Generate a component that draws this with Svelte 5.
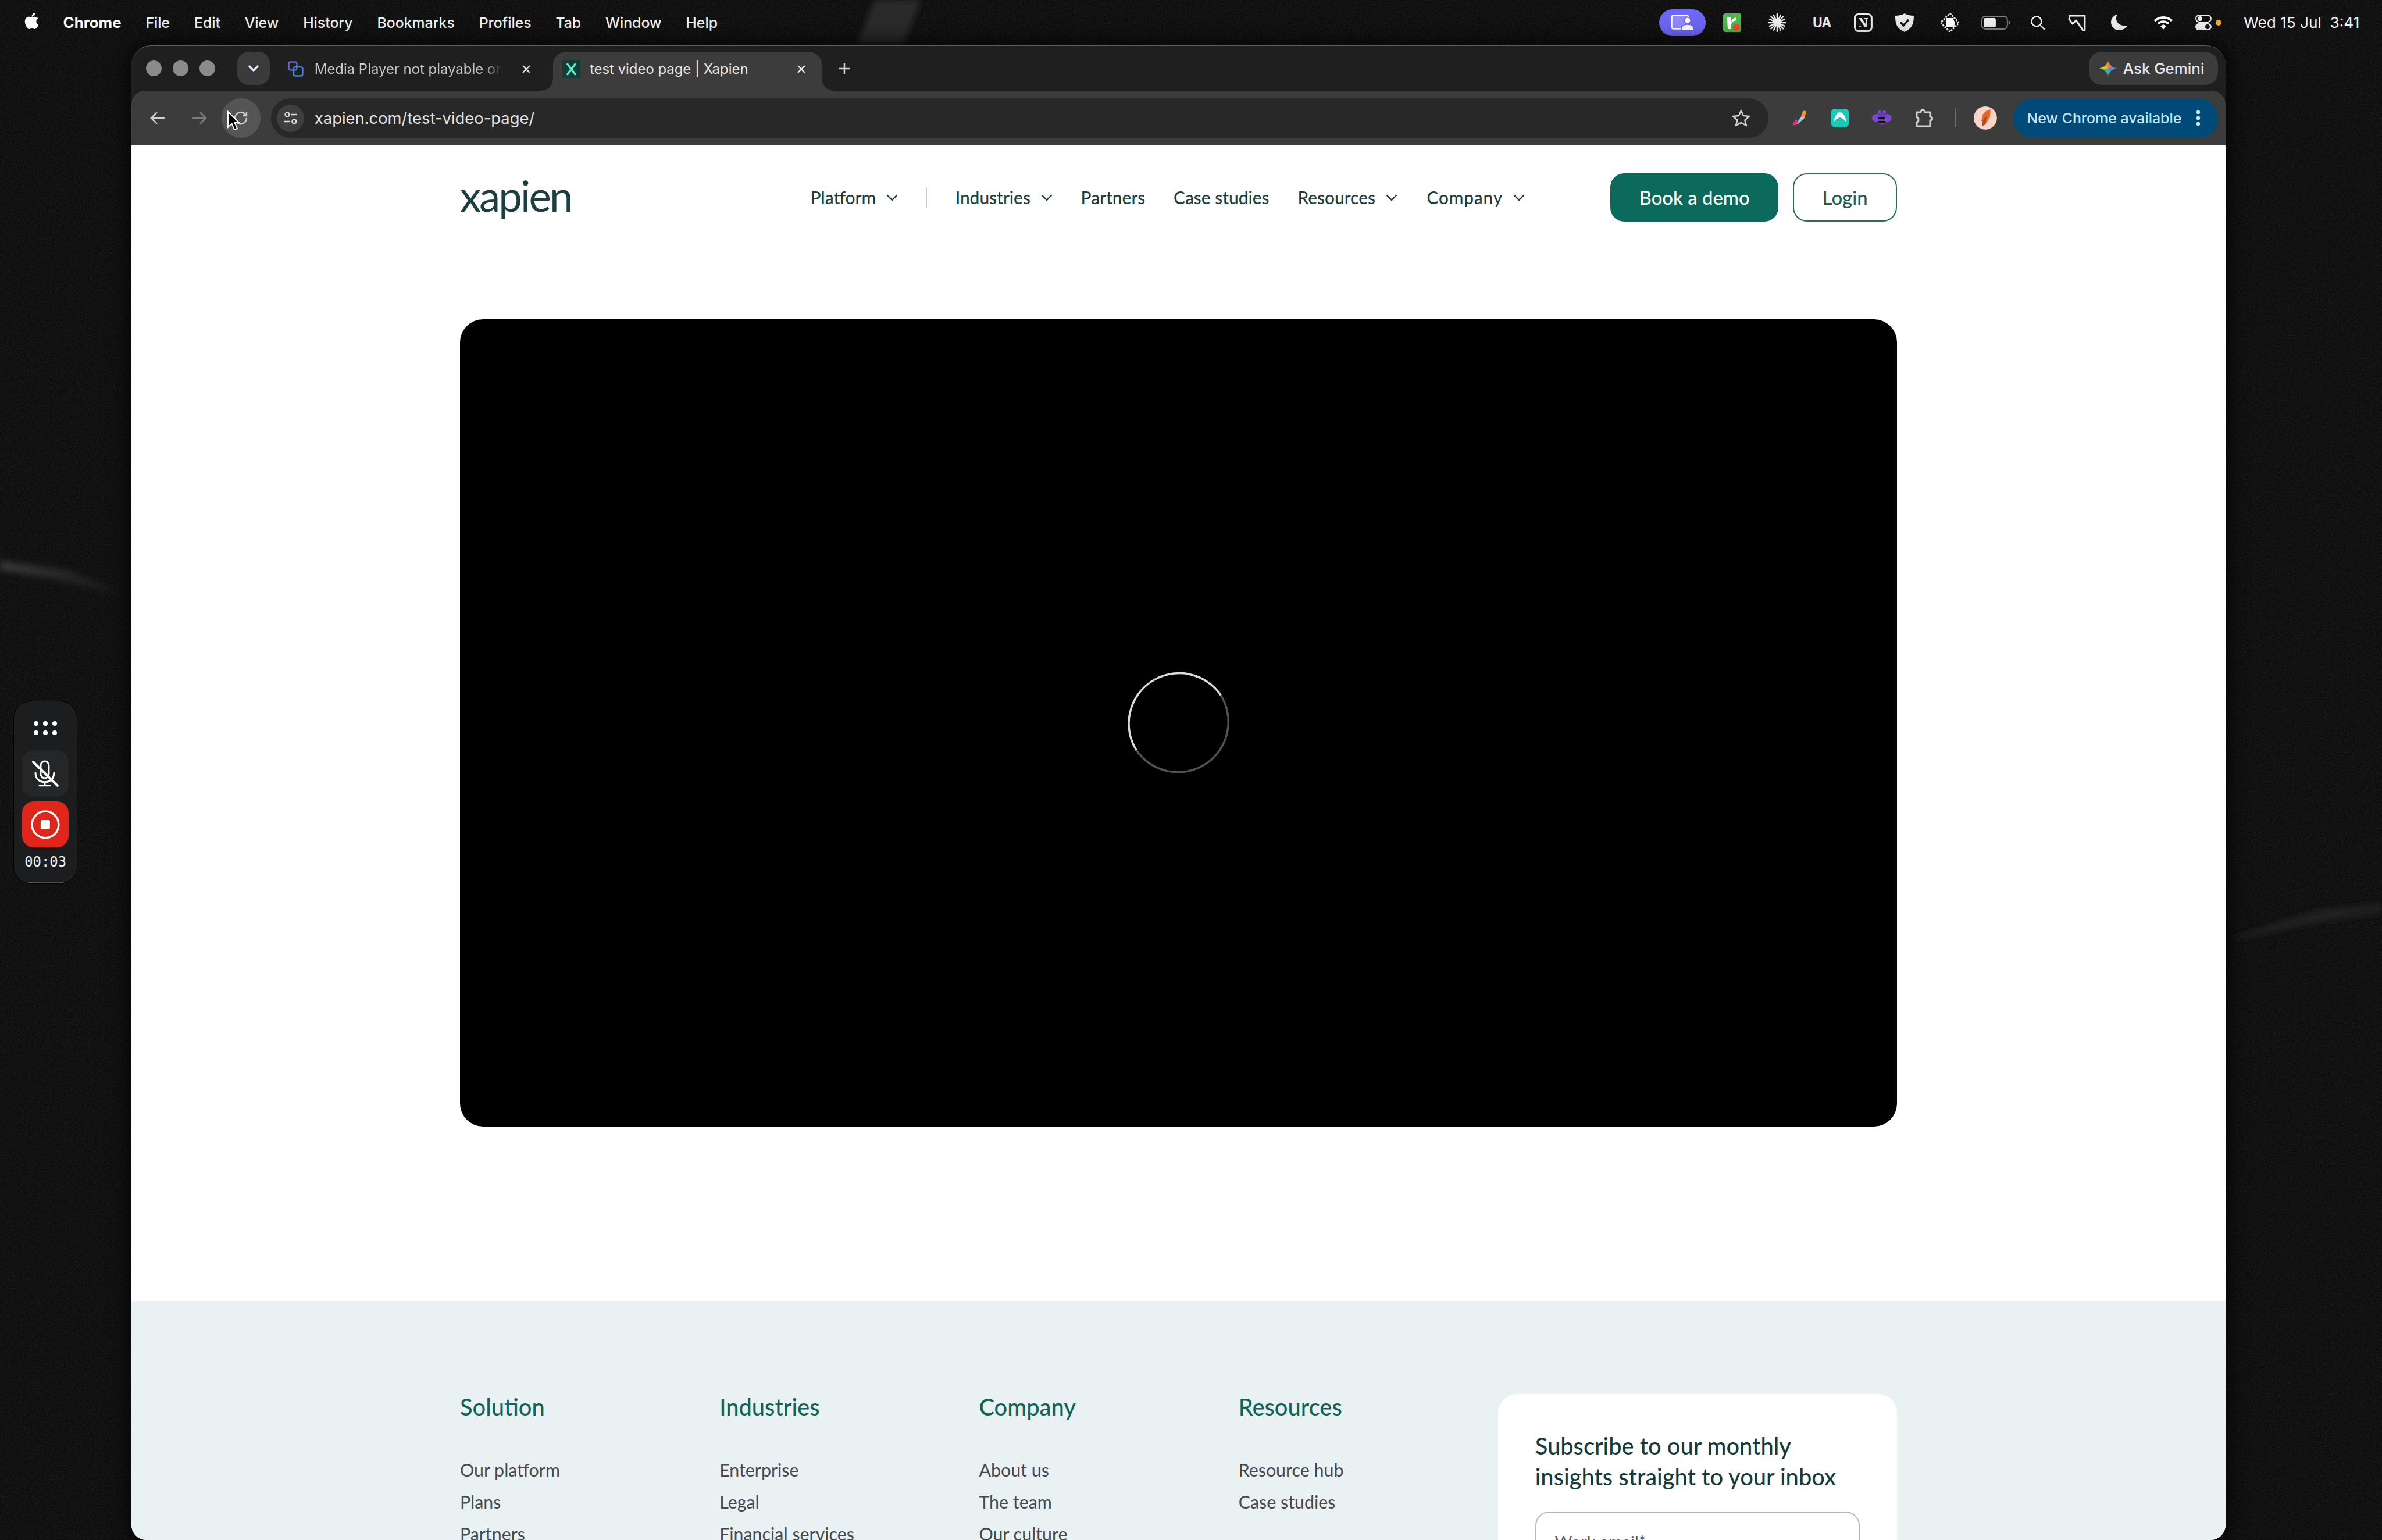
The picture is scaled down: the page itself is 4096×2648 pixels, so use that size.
<script>
  const menus = ['File', 'Edit', 'View', 'History', 'Bookmarks', 'Profiles', 'Tab', 'Window', 'Help']
  const nav = [
    { label: 'Platform', caret: true },
    { divider: true },
    { label: 'Industries', caret: true },
    { label: 'Partners' },
    { label: 'Case studies' },
    { label: 'Resources', caret: true },
    { label: 'Company', caret: true, wide: true }
  ]
  const columns = [
    { title: 'Solution', links: ['Our platform', 'Plans', 'Partners'] },
    { title: 'Industries', links: ['Enterprise', 'Legal', 'Financial services'] },
    { title: 'Company', links: ['About us', 'The team', 'Our culture'] },
    { title: 'Resources', links: ['Resource hub', 'Case studies'] }
  ]
</script>

<div class="screen">
  <!-- wallpaper -->
  <svg class="wallpaper" width="4112" height="2658" viewBox="0 0 4112 2658">
    <defs>
      <filter id="grain" x="0" y="0" width="100%" height="100%">
        <feTurbulence type="fractalNoise" baseFrequency="0.55" numOctaves="2" seed="4" />
        <feColorMatrix values="0 0 0 0 1  0 0 0 0 1  0 0 0 0 1  0.5 0 0 0 -0.17" />
      </filter>
      <filter id="soft"><feGaussianBlur stdDeviation="6" /></filter>
      <linearGradient id="streak" x1="0" x2="1">
        <stop offset="0" stop-color="#777" stop-opacity="0.4" />
        <stop offset="1" stop-color="#777" stop-opacity="0" />
      </linearGradient>
    </defs>
    <rect width="4112" height="2658" fill="#0c0c0c" />
    <rect width="4112" height="2658" filter="url(#grain)" opacity="0.3" />
    <path d="M0 968 L120 985 L226 1028 L226 1034 L100 1000 L0 984 Z" fill="url(#streak)" filter="url(#soft)" />
    <path d="M1510 0 L1590 0 L1560 76 L1480 76 Z" fill="#292929" filter="url(#soft)" />
    <path d="M4112 1560 L4000 1572 L3860 1616 L3860 1622 L4010 1590 L4112 1576 Z" fill="#222" filter="url(#soft)" />
  </svg>

  <header class="menubar">
    <svg class="apple" viewBox="0 0 384 512" fill="#fff"><path d="M318.7 268.7c-.2-36.7 16.4-64.4 50-84.8-18.8-26.9-47.2-41.7-84.7-44.6-35.5-2.8-74.3 20.7-88.5 20.7-15 0-49.4-19.7-76.4-19.7C63.3 141.2 4 184.8 4 273.5q0 39.3 14.4 81.2c12.8 36.7 59 126.7 107.2 125.2 25.2-.6 43-17.9 75.8-17.9 31.8 0 48.3 17.9 76.4 17.9 48.6-.7 90.4-82.5 102.6-119.3-65.2-30.7-61.7-90-61.7-91.9zm-56.6-164.2c27.3-32.4 24.8-61.9 24-72.5-24.1 1.4-52 16.4-67.9 34.9-17.5 19.8-27.8 44.3-25.6 71.9 26.1 2 49.9-11.4 69.5-34.3z"/></svg>
    <span class="app-name">Chrome</span>
    {#each menus as m}<span class="menu">{m}</span>{/each}

    <div class="status">
      <div class="st-pill">
        <svg width="40" height="28" viewBox="0 0 40 28"><rect x="1.5" y="1.5" width="29" height="23" rx="3" fill="#8f88ff" stroke="#fff" stroke-width="2.5"/><circle cx="29" cy="10" r="5.5" fill="#fff" stroke="#6e66f5" stroke-width="2"/><path d="M18 27c0-7 5-10 11-10s11 3 11 10z" fill="#fff" stroke="#6e66f5" stroke-width="1.5"/></svg>
      </div>
      <svg class="s-y" width="32" height="32" viewBox="0 0 32 32"><rect width="32" height="32" rx="4" fill="#4cb848"/><path d="M7 7h7v8c1-4 3-7 8-8v5c-4 1-7 3-8 8v7H8z" fill="#fff"/><circle cx="23" cy="24" r="6" fill="#ee4b36"/></svg>
      <svg class="s-star" width="32" height="32" viewBox="0 0 32 32" stroke="#eee" stroke-width="2.400" stroke-linecap="round"><path d="M16 1v30M1 16h30M5.500 5.500l21 21M26.500 5.500l-21 21M10 3l12 26M22 3L10 29M3 10l26 12M29 10L3 22"/><circle cx="16" cy="16" r="3" fill="#eee" stroke="none"/></svg>
      <span class="s-ua">UA</span>
      <svg class="s-n" width="32" height="32" viewBox="0 0 32 32"><rect x="1.500" y="1.500" width="29" height="29" rx="6" fill="none" stroke="#eee" stroke-width="3"/><path d="M8 8h5l7 10V10l-2-1V8h6v1l-2 1v14h-3L11 12v10l2 1v1H8v-1l2-1V10L8 9z" fill="#eee"/></svg>
      <svg class="s-shield" width="32" height="32" viewBox="0 0 32 32"><path d="M16 0C21 3 26 4 32 4c0 13-2 22-16 28C2 26 0 17 0 4c6 0 11-1 16-4z" fill="#e8e8e8"/><path d="M9 15l5 6 9-10" fill="none" stroke="#111" stroke-width="3.500"/></svg>
      <svg class="s-drive" width="32" height="32" viewBox="0 0 32 32"><path d="M16 0l16 16-16 16L0 16z" fill="none" stroke="#eee" stroke-width="3" stroke-dasharray="3 2"/><path d="M9 8h12l3 6v9H9z" fill="#fff"/></svg>
      <svg class="s-batt" width="50" height="24" viewBox="0 0 50 24"><rect x="1" y="1" width="44" height="22" rx="6" fill="none" stroke="#808080" stroke-width="2"/><rect x="4" y="4" width="21" height="16" rx="3" fill="#eee"/><path d="M47 8c2 1 3 3 3 4s-1 3-3 4z" fill="#808080"/></svg>
      <svg class="s-search" width="26" height="24" viewBox="0 0 26 24" fill="none" stroke="#eee" stroke-width="2.500"><circle cx="10" cy="10" r="8.500"/><path d="M16 16l8 8" stroke-linecap="round"/></svg>
      <svg class="s-tag" width="32" height="28" viewBox="0 0 32 28" fill="none" stroke="#eee" stroke-width="3" stroke-linejoin="round"><path d="M3 2h26v23a2 2 0 0 1-4 1L14 10 8 16 2 8z"/></svg>
      <svg class="s-moon" width="28" height="27" viewBox="0 0 28 27"><path d="M11 0C6 8 10 20 28 20c-4 5-9 7-14 7C5 27 0 20 0 13 0 7 5 1 11 0z" fill="#eee"/></svg>
      <svg class="s-wifi" width="34" height="24" viewBox="0 0 34 24" fill="none" stroke="#fff" stroke-width="4"><path d="M2 9c9-8 21-8 30 0M8 14c5-5 13-5 18 0"/><path d="M12 18l5-3 5 3-5 6z" fill="#fff" stroke="none"/></svg>
      <svg class="s-ctrl" width="28" height="27" viewBox="0 0 28 27"><rect x="1" y="1" width="26" height="12" rx="6" fill="none" stroke="#eee" stroke-width="2"/><circle cx="8" cy="7" r="4" fill="#eee"/><rect y="15" width="28" height="12" rx="6" fill="#eee"/><circle cx="21" cy="21" r="4" fill="#111"/></svg>
      <span class="s-dot"></span>
      <span class="clock">Wed 15 Jul&nbsp;&nbsp;3:41</span>
    </div>
  </header>

  <div class="window">
    <div class="tabstrip">
      <div class="lights"><i></i><i></i><i></i></div>
      <div class="tab-search">
        <svg width="20" height="12" viewBox="0 0 20 12" fill="none" stroke="#dfe6ff" stroke-width="3.500" stroke-linecap="round" stroke-linejoin="round"><path d="M3 2l7 7 7-7"/></svg>
      </div>
      <div class="tab">
        <svg width="27" height="27" viewBox="0 0 27 27" fill="none" stroke-width="2.500"><rect x="1.500" y="1.500" width="14" height="14" rx="3" stroke="#5d66cf"/><rect x="10" y="10" width="15.500" height="15.500" rx="3" stroke="#3f86e4"/></svg>
        <span class="tab-title fade">Media Player not playable on</span>
        <svg class="close" width="14" height="14" viewBox="0 0 14 14" stroke="#d8d8d8" stroke-width="2.400"><path d="M1 1l12 12M13 1L1 13"/></svg>
      </div>
      <div class="tab active">
        <svg class="x-fav" width="31" height="31" viewBox="0 0 31 31"><rect width="31" height="31" fill="#123c3a"/><path d="M8 6l15 20M23 6L8 26" stroke="#5ff0c4" stroke-width="3.500"/></svg>
        <span class="tab-title">test video page | Xapien</span>
        <svg class="close" width="14" height="14" viewBox="0 0 14 14" stroke="#e4e4e4" stroke-width="2.400"><path d="M1 1l12 12M13 1L1 13"/></svg>
      </div>
      <svg class="plus" width="20" height="20" viewBox="0 0 20 20" stroke="#d8d8d8" stroke-width="2.500"><path d="M10 1v18M1 10h18"/></svg>
      <div class="gemini">
        <span class="gem-star"></span>
        <span>Ask Gemini</span>
      </div>
    </div>

    <div class="toolbar">
      <div class="tb-btn">
        <svg width="26" height="24" viewBox="0 0 26 24" fill="none" stroke="#cfcfcf" stroke-width="2.600"><path d="M25 12H2M12 2L2 12l10 10"/></svg>
      </div>
      <div class="tb-btn">
        <svg width="26" height="24" viewBox="0 0 26 24" fill="none" stroke="#7c7c7c" stroke-width="2.600"><path d="M1 12h23M14 2l10 10-10 10"/></svg>
      </div>
      <div class="tb-btn hover">
        <svg width="26" height="26" viewBox="0 0 26 26" fill="none" stroke="#c9c9c9" stroke-width="2.600"><path d="M23 13a10 10 0 1 1-3-7l3 3"/><path d="M23 2v7h-7"/></svg>
      </div>

      <div class="omnibox">
        <div class="site-btn">
          <svg width="24" height="24" viewBox="0 0 24 24" fill="none" stroke="#ddd" stroke-width="2.400"><circle cx="6" cy="6" r="3.500"/><path d="M13 6h10M1 18h10"/><circle cx="18" cy="18" r="3.500"/></svg>
        </div>
        <span class="url">xapien.com/test-video-page/</span>
        <svg class="star" width="30" height="30" viewBox="0 0 30 30" fill="none" stroke="#cfcfcf" stroke-width="2.600" stroke-linejoin="round"><path d="M15 2l4 9 10 1-7.500 6.500L24 28l-9-5-9 5 2.500-9.500L1 12l10-1z"/></svg>
      </div>

      <div class="ext-icons">
        <svg width="27" height="26" viewBox="0 0 27 26"><path d="M18 8l5 4-12 11-5 2z" fill="#9fc7e6"/><path d="M1 24l6-9 5 5-7 6z" fill="#d63768"/><path d="M16 10l3-8c1-2 6-2 6 1l-3 9z" fill="#f7971e"/></svg>
        <svg width="32" height="32" viewBox="0 0 32 32"><rect width="32" height="32" rx="8" fill="#1ec8b4"/><path d="M5 23c2-11 6-17 11-17s9 6 11 17c-3-3-5-6-7-6l-4-3-4 3c-2 0-4 3-7 6z" fill="#fff"/></svg>
        <svg width="34" height="26" viewBox="0 0 34 26"><ellipse cx="8" cy="13" rx="8" ry="7" fill="#7b45d6"/><ellipse cx="26" cy="13" rx="8" ry="7" fill="#7b45d6"/><circle cx="13" cy="3" r="3" fill="#7b45d6"/><circle cx="21" cy="3" r="3" fill="#7b45d6"/><rect x="11" y="5" width="12" height="20" rx="6" fill="#6c3bbd"/><path d="M11 12h12v3H11zM11 18h12v3H11z" fill="#111"/></svg>
        <svg width="32" height="32" viewBox="0 0 32 32" fill="none" stroke="#cfcfcf" stroke-width="3" stroke-linejoin="round"><path d="M3 6h7c0-5 7-5 7 0h9v8c5 0 5 6 0 6v10H3v-7c4 0 4-8 0-8z"/></svg>
        <span class="sep"></span>
        <svg class="avatar" width="40" height="40" viewBox="0 0 40 40"><circle cx="20" cy="20" r="20" fill="#fbd5c8"/><path d="M16 13l5-5 8-3-1 13-8 13-6 3 3-8-4-1z" fill="#e8652a"/><path d="M16 24l6-8-2 15-6 3z" fill="#a8471d"/></svg>
      </div>

      <div class="update">
        <span>New Chrome available</span>
        <svg width="8" height="28" viewBox="0 0 8 28" fill="#c2e7ff"><circle cx="4" cy="4" r="3.200"/><circle cx="4" cy="14" r="3.200"/><circle cx="4" cy="24" r="3.200"/></svg>
      </div>
    </div>

    <main class="page">
      <div class="container">
        <div class="site-header">
          <span class="logo">xapien</span>
          <nav class="nav">
            {#each nav as item}
              {#if item.divider}
                <span class="nav-divider"></span>
              {:else}
                <span class="nav-item" class:wide={item.wide}>
                  {item.label}
                  {#if item.caret}
                    <svg width="20" height="12" viewBox="0 0 20 12" fill="none" stroke="#1d3f3f" stroke-width="2.400"><path d="M1.500 1.500L10 10l8.500-8.500"/></svg>
                  {/if}
                </span>
              {/if}
            {/each}
          </nav>
          <div class="actions">
            <span class="btn primary">Book a demo</span>
            <span class="btn outline">Login</span>
          </div>
        </div>

        <div class="video">
          <svg width="180" height="180" viewBox="0 0 180 180" fill="none" stroke-width="3.500">
            <path d="M162.800 42.400A87 87 0 0 1 17.200 137.600" stroke="#525252" />
            <path d="M17.200 137.600A87 87 0 0 1 162.800 42.400" stroke="#dcdcdc" />
          </svg>
        </div>
      </div>

      <footer class="footer">
        <div class="container footer-grid">
          {#each columns as col}
            <div>
              <h4>{col.title}</h4>
              <ul>
                {#each col.links as link}<li>{link}</li>{/each}
              </ul>
            </div>
          {/each}
          <div class="subscribe">
            <h3>Subscribe to our monthly<br />insights straight to your inbox</h3>
            <div class="email"><span>Work email*</span></div>
          </div>
        </div>
      </footer>
    </main>
  </div>

  <!-- screen recorder overlay -->
  <div class="recorder">
    <div class="grip">{#each Array(6) as _}<i></i>{/each}</div>
    <div class="rec-btn mic">
      <svg width="46" height="46" viewBox="0 0 46 46" fill="none" stroke="#fff" stroke-width="3" stroke-linecap="round">
        <path d="M15 9a7 7 0 0 1 14 0v15a7 7 0 0 1-14 0z" />
        <path d="M6 22c0 10 7 16 16 16s16-6 16-16M22 38v5M13 44h18" />
        <path d="M2 3l42 41" stroke-width="4" />
      </svg>
    </div>
    <div class="rec-btn stop">
      <svg width="52" height="52" viewBox="0 0 52 52"><circle cx="26" cy="26" r="23" fill="none" stroke="#fff" stroke-width="3.500"/><rect x="18" y="18" width="16" height="16" rx="3" fill="#fff"/></svg>
    </div>
    <span class="timer">00:03</span>
    <span class="handle"></span>
  </div>

  <svg class="cursor" width="22" height="36" viewBox="0 0 22 36"><path d="M2 2v27l6.500-6.500L13 33l5-2-4.500-10H21z" fill="#000" stroke="#fff" stroke-width="2"/></svg>
</div>

<style>
  :global(html), :global(body) {
    margin: 0;
    background: #0b0b0b;
    overflow: hidden;
  }

  /* everything below is written in reference pixels */
  .screen {
    position: relative;
    zoom: 0.99611;
    width: 4112px;
    height: 2658px;
    overflow: hidden;
    font-family: Inter, 'Liberation Sans', sans-serif;
    color: #fff;
  }
  .wallpaper {
    position: absolute;
    inset: 0;
  }

  .menubar {
    position: relative;
    height: 78px;
    display: flex;
    align-items: center;
    gap: 42px;
    padding-left: 42px;
    padding-right: 36px;
    box-sizing: border-box;
    font-size: 24.900px;
    font-weight: 500;
    color: #f2f2f2;
  }
  .apple {
    width: 25px;
    height: 32px;
    margin-top: -6px;
  }
  .app-name {
    font-size: 26px;
    font-weight: 700;
    color: #fff;
  }
  .status {
    margin-left: auto;
    display: flex;
    align-items: center;
  }
  .st-pill {
    width: 80px;
    height: 46px;
    border-radius: 23px;
    background: #6e66f5;
    display: flex;
    align-items: center;
    justify-content: center;
  }
  .s-y { margin-left: 30px; }
  .s-star { margin-left: 46px; }
  .s-ua {
    margin-left: 45px;
    width: 33px;
    font-size: 23px;
    font-weight: 700;
    color: #eee;
    letter-spacing: -1px;
  }
  .s-n { margin-left: 38px; }
  .s-shield { margin-left: 40px; }
  .s-drive { margin-left: 46px; }
  .s-batt { margin-left: 38px; }
  .s-search { margin-left: 36px; }
  .s-tag { margin-left: 38px; }
  .s-moon { margin-left: 42px; }
  .s-wifi { margin-left: 45px; }
  .s-ctrl { margin-left: 39px; }
  .s-dot {
    margin-left: 7px;
    width: 10px;
    height: 10px;
    border-radius: 50%;
    background: #f5a623;
  }
  .clock {
    margin-left: 38px;
    width: 203px;
    white-space: nowrap;
    font-size: 26.300px;
    font-weight: 400;
  }

  .window {
    position: relative;
    margin-left: 227px;
    width: 3615px;
    height: 2580px;
    border-radius: 34px 34px 26px 26px;
    overflow: hidden;
    background: #1f1f1f;
    border-top: 2px solid #5c5c5c;
    box-sizing: border-box;
    display: flex;
    flex-direction: column;
    box-shadow: 0 0 40px #000;
  }

  .tabstrip {
    height: 78px;
    flex: none;
    display: flex;
    align-items: center;
    font-size: 24px;
    color: #c8c8c8;
  }
  .lights {
    display: flex;
    gap: 19px;
    margin-left: 25px;
  }
  .lights i {
    width: 27px;
    height: 27px;
    border-radius: 50%;
    background: #8b8b8b;
  }
  .tab-search {
    margin-left: 39px;
    width: 56px;
    height: 57px;
    border-radius: 20px;
    background: #3b3b3b;
    display: flex;
    align-items: center;
    justify-content: center;
  }
  .tab {
    position: relative;
    align-self: flex-end;
    height: 68px;
    box-sizing: border-box;
    display: flex;
    align-items: center;
    width: 465px;
    margin-left: 14px;
    padding-left: 17px;
    padding-bottom: 8px;
  }
  .tab-title {
    margin-left: 19px;
    white-space: nowrap;
    overflow: hidden;
    flex: 1;
  }
  .fade {
    mask-image: linear-gradient(to right, #000 90%, transparent 100%);
  }
  .close {
    flex: none;
    margin-left: 35px;
    margin-right: 29px;
  }
  .tab.active {
    width: 464px;
    margin-left: 10px;
    padding-left: 16px;
    background: #3c3c3c;
    border-radius: 22px 22px 0 0;
    color: #e6e6e6;
  }
  .tab.active .tab-title {
    margin-left: 16px;
  }
  .tab.active::before,
  .tab.active::after {
    content: '';
    position: absolute;
    bottom: 0;
    width: 20px;
    height: 20px;
  }
  .tab.active::before {
    left: -20px;
    background: radial-gradient(circle at 0 0, transparent 19.500px, #3c3c3c 20px);
  }
  .tab.active::after {
    right: -20px;
    background: radial-gradient(circle at 100% 0, transparent 19.500px, #3c3c3c 20px);
  }
  .plus {
    margin-left: 29px;
  }
  .gemini {
    margin-left: auto;
    margin-right: 13px;
    width: 223px;
    height: 57px;
    box-sizing: border-box;
    padding-left: 18px;
    border-radius: 22px;
    background: #3c3c3c;
    display: flex;
    align-items: center;
    gap: 11px;
    color: #e8e8e8;
    font-weight: 500;
    font-size: 26px;
    white-space: nowrap;
  }
  .gem-star {
    width: 30px;
    height: 30px;
    flex: none;
    background: conic-gradient(#f0803a 0 12%, #4b8df0 25%, #4b8df0 40%, #45b86a 55%, #45b86a 65%, #e8c53a 78%, #f0803a 100%);
    clip-path: path('M15 0C16 8 22 14 30 15 22 16 16 22 15 30 14 22 8 16 0 15 8 14 14 8 15 0Z');
  }

  .toolbar {
    height: 94px;
    flex: none;
    background: #3c3c3c;
    border-radius: 24px 24px 0 0;
    display: flex;
    align-items: center;
    padding-left: 11px;
    gap: 4px;
  }
  .tb-btn {
    width: 68px;
    height: 68px;
    border-radius: 50%;
    display: flex;
    align-items: center;
    justify-content: center;
  }
  .tb-btn.hover {
    background: #555;
  }
  .omnibox {
    margin-left: 14px;
    width: 2585px;
    height: 68px;
    box-sizing: border-box;
    padding-left: 10px;
    border-radius: 34px;
    background: #282828;
    display: flex;
    align-items: center;
  }
  .site-btn {
    width: 47px;
    height: 47px;
    border-radius: 50%;
    background: #3f3f3f;
    display: flex;
    align-items: center;
    justify-content: center;
  }
  .url {
    margin-left: 18px;
    font-size: 27.500px;
    color: #e4e4e4;
  }
  .star {
    margin-left: auto;
    margin-right: 32px;
  }
  .ext-icons {
    margin-left: 36px;
    display: flex;
    align-items: center;
    gap: 40px;
  }
  .sep {
    width: 3px;
    height: 32px;
    margin-left: -4px;
    background: #6a6a6a;
  }
  .avatar {
    margin-left: -10px;
  }
  .update {
    margin-left: 25px;
    width: 353px;
    height: 69px;
    box-sizing: border-box;
    padding-left: 23px;
    border-radius: 35px;
    background: #004a77;
    color: #c2e7ff;
    display: flex;
    align-items: center;
    font-size: 25px;
    font-weight: 500;
    white-space: nowrap;
  }
  .update svg {
    margin-left: 25px;
  }

  .page {
    flex: 1;
    background: #fff;
    min-height: 0;
    overflow: hidden;
    font-family: Lato, 'Liberation Sans', sans-serif;
  }
  .container {
    width: 2481px;
    margin: 0 auto;
  }
  .site-header {
    display: flex;
    align-items: center;
    height: 84px;
    padding-top: 48px;
  }
  .logo {
    width: 193px;
    font-size: 73px;
    font-weight: 400;
    color: #1d3f3f;
    letter-spacing: -3px;
    line-height: 84px;
    margin-top: -8px;
    white-space: nowrap;
  }
  .nav {
    margin-left: 412px;
    display: flex;
    align-items: center;
    gap: 49px;
    font-size: 30px;
    font-weight: 500;
    color: #1d3f3f;
  }
  .nav-item {
    display: flex;
    align-items: center;
    gap: 18px;
    white-space: nowrap;
  }
  .nav-item.wide {
    margin-left: 2px;
    letter-spacing: 0.8px;
  }
  .nav-divider {
    width: 1px;
    height: 36px;
    background: #c9cfcf;
  }
  .actions {
    margin-left: auto;
    display: flex;
    gap: 25px;
    font-size: 33px;
    font-weight: 500;
  }
  .btn {
    height: 84px;
    box-sizing: border-box;
    border-radius: 24px;
    display: flex;
    align-items: center;
    justify-content: center;
  }
  .primary {
    width: 290px;
    background: #0b6a5c;
    color: #fff;
  }
  .outline {
    width: 180px;
    border: 2.500px solid #2a6a60;
    color: #1f5f55;
  }
  .video {
    margin-top: 168px;
    height: 1394px;
    border-radius: 40px;
    background: #000;
    display: flex;
    align-items: center;
    justify-content: center;
  }

  .footer {
    margin-top: 301px;
    background: #e9f1f3;
    padding-top: 160px;
    height: 900px;
  }
  .footer-grid {
    display: grid;
    grid-template-columns: repeat(4, 448px) 689px;
  }
  h4 {
    margin: 0;
    font-size: 40px;
    line-height: 44px;
    font-weight: 500;
    color: #0f6656;
  }
  ul {
    list-style: none;
    margin: 60px 0 0;
    padding: 0;
    font-size: 30.500px;
    line-height: 55px;
    color: #444b4c;
  }
  .subscribe {
    background: #fff;
    border-radius: 32px;
    padding: 64px 64px 0;
    height: 600px;
    box-sizing: border-box;
  }
  h3 {
    margin: 0;
    font-size: 40px;
    line-height: 53px;
    font-weight: 500;
    color: #153c3a;
  }
  .email {
    margin-top: 33px;
    height: 110px;
    box-sizing: border-box;
    border: 2.500px solid #b8b8b8;
    border-radius: 24px;
    padding: 32px 32px 0;
    font-size: 29px;
    color: #555;
  }

  .recorder {
    position: absolute;
    left: 23px;
    top: 1210px;
    width: 111px;
    height: 316px;
    box-sizing: border-box;
    border-radius: 30px;
    background: #1c1d1f;
    border: 2px solid #000;
    display: flex;
    flex-direction: column;
    align-items: center;
    padding-top: 34px;
  }
  .grip {
    display: grid;
    grid-template-columns: repeat(3, 8px);
    gap: 8px;
    margin-bottom: 26px;
  }
  .grip i {
    width: 8px;
    height: 8px;
    border-radius: 50%;
    background: #fff;
  }
  .rec-btn {
    width: 80px;
    height: 80px;
    flex: none;
    border-radius: 20px;
    display: flex;
    align-items: center;
    justify-content: center;
  }
  .mic {
    background: #252627;
  }
  .stop {
    margin-top: 8px;
    background: #e0251b;
  }
  .timer {
    margin-top: 11px;
    font-family: 'DejaVu Sans Mono', monospace;
    font-size: 24px;
    line-height: 30px;
    color: #f4f4f4;
  }
  .handle {
    position: absolute;
    bottom: 1px;
    left: 25px;
    width: 60px;
    height: 2px;
    background: #555;
  }
  .cursor {
    position: absolute;
    left: 392px;
    top: 191px;
  }
</style>
